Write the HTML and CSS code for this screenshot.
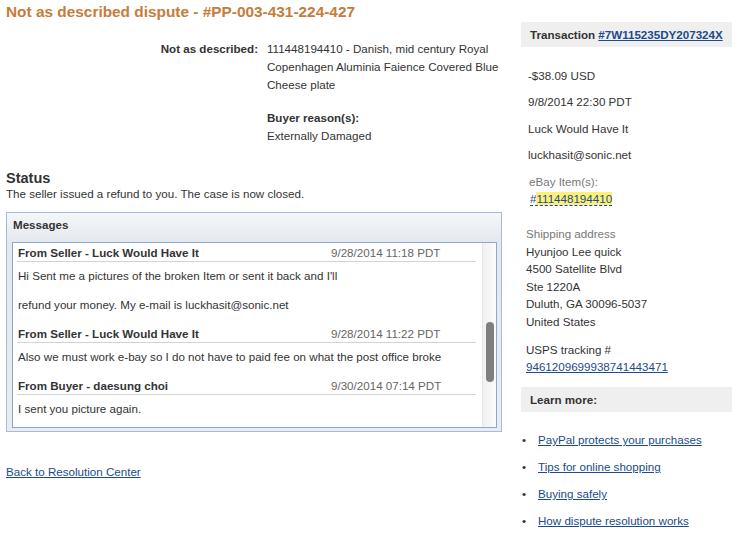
FILE: index.html
```html
<!DOCTYPE html>
<html lang="en">
<head>
    <meta charset="UTF-8">
    <meta name="viewport" content="width=device-width, initial-scale=1.0">
    <title>Not as described dispute</title>
    <link rel="stylesheet" href="styles.css">
</head>
<body>
<div class="page">
    <div class="main">
        <h1 class="title">Not as described dispute - #PP-003-431-224-427</h1>

        <div class="details">
            <div class="details-label">Not as described:</div>
            <div class="details-value">111448194410 - Danish, mid century Royal Copenhagen Aluminia Faience Covered Blue Cheese plate</div>
            <div class="details-label"></div>
            <div class="details-value reason">
                <strong>Buyer reason(s):</strong><br>
                Externally Damaged
            </div>
        </div>

        <h2 class="status-title">Status</h2>
        <p class="status-text">The seller issued a refund to you. The case is now closed.</p>

        <div class="messages">
            <div class="messages-head">Messages</div>
            <div class="messages-body">
                <div class="message-list">
                    <div class="message">
                        <div class="message-head">
                            <span class="message-from">From Seller - Luck Would Have It</span>
                            <span class="message-date">9/28/2014 11:18 PDT</span>
                        </div>
                        <p class="message-text">Hi Sent me a pictures of the broken Item or sent it back and I'll</p>
                        <p class="message-text">refund your money. My e-mail is luckhasit@sonic.net</p>
                    </div>
                    <div class="message">
                        <div class="message-head">
                            <span class="message-from">From Seller - Luck Would Have It</span>
                            <span class="message-date">9/28/2014 11:22 PDT</span>
                        </div>
                        <p class="message-text">Also we must work e-bay so I do not have to paid fee on what the post office broke</p>
                    </div>
                    <div class="message">
                        <div class="message-head">
                            <span class="message-from">From Buyer - daesung choi</span>
                            <span class="message-date">9/30/2014 07:14 PDT</span>
                        </div>
                        <p class="message-text">I sent you picture again.</p>
                    </div>
                </div>
                <div class="scrollbar"><div class="scrollbar-thumb"></div></div>
            </div>
        </div>

        <a class="back-link" href="#">Back to Resolution Center</a>
    </div>

    <div class="side">
        <div class="side-box">Transaction <a href="#">#7W115235DY207324X</a></div>

        <div class="transaction">
            <p>-$38.09 USD</p>
            <p>9/8/2014 22:30 PDT</p>
            <p>Luck Would Have It</p>
            <p>luckhasit@sonic.net</p>
        </div>

        <div class="items">
            <span class="muted">eBay Item(s):</span><br>
            <a class="item-link" href="#">#<span class="highlight">111448194410</span></a>
        </div>

        <div class="address">
            <span class="muted">Shipping address</span><br>
            Hyunjoo Lee quick<br>
            4500 Satellite Blvd<br>
            Ste 1220A<br>
            Duluth, GA 30096-5037<br>
            United States
        </div>

        <div class="tracking">
            USPS tracking #<br>
            <a href="#">9461209699938741443471</a>
        </div>

        <div class="side-box">Learn more:</div>

        <ul class="learn-list">
            <li><a href="#">PayPal protects your purchases</a></li>
            <li><a href="#">Tips for online shopping</a></li>
            <li><a href="#">Buying safely</a></li>
            <li><a href="#">How dispute resolution works</a></li>
        </ul>
    </div>
</div>
</body>
</html>
```

FILE: styles.css
```css
body {
    margin: 0;
    font-family: "Liberation Sans", Arial, Helvetica, sans-serif;
    font-size: 11.6px;
    color: #333333;
    background: #ffffff;
}

a {
    color: #1b4b8a;
    text-decoration: underline;
}

.page {
    display: flex;
    padding: 0 8px 0 6px;
}

.main {
    width: 496px;
}

.side {
    width: 211px;
    margin-left: 19px;
    padding-top: 22px;
}

.title {
    margin: 2px 0 18px;
    font-size: 15.4px;
    line-height: 20px;
    color: #c67c3a;
}

/* dispute details */
.details {
    display: grid;
    grid-template-columns: 252px 234px;
    column-gap: 9px;
    line-height: 18px;
}

.details-label {
    text-align: right;
    font-weight: bold;
}

.reason {
    margin-top: 15px;
}

.status-title {
    margin: 25px 0 0;
    font-size: 14.5px;
    line-height: 16px;
}

.status-text {
    margin: 0;
    line-height: 15px;
}

/* messages box */
.messages {
    margin-top: 11px;
    border: 1px solid #a7bbd5;
    padding: 0 4px 3px 5px;
    background: linear-gradient(to bottom, #f4f6f9, #e4e8ee 30px, #e9edf2);
}

.messages-head {
    height: 29px;
    line-height: 24px;
    padding-left: 1px;
    font-weight: bold;
}

.messages-body {
    display: flex;
    height: 184px;
    border: 1px solid #8ea8cb;
    background: #ffffff;
    overflow: hidden;
}

.message-list {
    flex: 1;
    padding: 2px 6px 0 4px;
}

.message {
    margin-bottom: 14px;
}

.message-head {
    display: flex;
    line-height: 15px;
    padding: 0 0 1px 1px;
    border-bottom: 1px solid #d3d3d3;
}

.message-from {
    flex: 1;
    font-weight: bold;
}

.message-date {
    width: 145px;
    color: #666666;
}

.message-text {
    margin: 6px 0 0 1px;
    line-height: 15px;
}

.message-text + .message-text {
    margin-top: 14px;
}

.scrollbar {
    width: 13px;
    border-left: 1px solid #e6e6e6;
    background: linear-gradient(to right, #f1f1f1, #fbfbfb);
}

.scrollbar-thumb {
    width: 8px;
    height: 60px;
    margin: 79px 0 0 3px;
    border-radius: 4px;
    background: #7f7f7f;
}

.back-link {
    display: inline-block;
    margin-top: 32px;
    line-height: 15px;
}

/* right column */
.side-box {
    height: 25px;
    line-height: 26px;
    padding-left: 9px;
    background: #efefef;
    font-weight: bold;
}

.transaction {
    padding: 21px 0 0 7px;
}

.transaction p {
    margin: 0 0 11.3px;
    line-height: 15px;
}

.muted {
    color: #777777;
}

.items {
    margin-top: 1px;
    padding-left: 8px;
    line-height: 17px;
}

.item-link {
    text-decoration: none;
    border-bottom: 1px dashed #1b4b8a;
    margin-left: 1px;
}

.highlight {
    background: #fdf07a;
}

.address {
    margin-top: 18px;
    padding-left: 5px;
    line-height: 17.5px;
}

.tracking {
    margin: 11px 0 12px;
    padding-left: 5px;
    line-height: 17px;
}

.learn-list {
    margin: 20px 0 0;
    padding: 0;
    list-style: none;
}

.learn-list li {
    display: flex;
    line-height: 15px;
    margin-bottom: 12px;
}

.learn-list li::before {
    content: "\2022";
    width: 17px;
    padding-left: 1px;
    box-sizing: border-box;
}
```
